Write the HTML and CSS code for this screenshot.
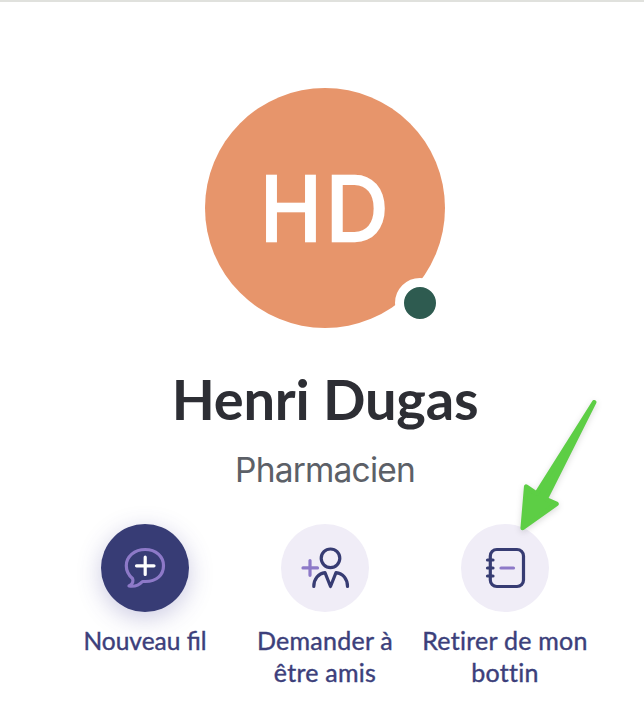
FILE: index.html
```html
<!DOCTYPE html>
<html lang="fr">
<head>
<meta charset="utf-8">
<title>Henri Dugas</title>
<link rel="stylesheet" href="styles.css">
</head>
<body>
<main class="profile">
  <div class="avatar"><span class="initials">HD</span><span class="status"></span></div>
  <h1 class="name">Henri Dugas</h1>
  <p class="role">Pharmacien</p>
  <div class="actions">
    <div class="action">
      <div class="circle primary">
        <svg width="88" height="88" viewBox="0 0 88 88" fill="none" stroke-width="3.200" stroke-linecap="round" stroke-linejoin="round">
          <path stroke="#8d79c8" d="M31.500 54.500C27.500 51 25.300 46.500 25.300 41.700C25.300 32.500 33.500 25.500 44.200 25.500C55 25.500 62.500 32.500 62.500 41.700C62.500 51 55.500 57.500 44.500 57.500H41.500C38 61.300 33 62.800 28 62C31.500 60 32.700 57.300 31.500 54.500Z"/>
          <path stroke="#fff" d="M44.200 33.200V50.500M35.500 41.800H53"/>
        </svg>
      </div>
      <span class="label short">Nouveau fil</span>
    </div>
    <div class="action">
      <div class="circle">
        <svg width="88" height="88" viewBox="0 0 88 88" fill="none" stroke="#373c73" stroke-width="3.200" stroke-linecap="round" stroke-linejoin="round">
          <circle cx="49.500" cy="34.300" r="9.300"/>
          <path d="M32.800 62.500C32.800 55 37.500 49.300 44 48.700L49.500 62.500L55 48.700C62 49.300 66.500 55 66.500 62.500"/>
          <path stroke="#8d79c8" d="M29 36.500V51.300M22 43.900H36.500"/>
        </svg>
      </div>
      <span class="label">Demander à être amis</span>
    </div>
    <div class="action">
      <div class="circle">
        <svg width="88" height="88" viewBox="0 0 88 88" fill="none" stroke="#373c73" stroke-width="3.200" stroke-linecap="round">
          <rect x="29.300" y="25.500" width="33.200" height="37" rx="6.500"/>
          <path d="M26.500 36H32M26.500 44H32M26.500 52H32"/>
          <path stroke="#8d79c8" d="M40 44H52.500"/>
        </svg>
      </div>
      <span class="label">Retirer de mon bottin</span>
    </div>
  </div>
  <svg class="pointer" width="100" height="150" viewBox="0 0 100 150">
    <path fill="#5dce45" stroke="#5dce45" stroke-width="4.500" stroke-linejoin="round" d="M84.200 14.300L26.500 105.700L16.200 98.500L12.700 140L46.500 115.800L35.600 111Z"/>
  </svg>
</main>
</body>
</html>
```
FILE: styles.css
```css
* { box-sizing: border-box; }
body {
  margin: 0;
  background: #fff;
  font-family: Lato, "Liberation Sans", sans-serif;
}
.profile {
  position: relative;
  width: 644px;
  height: 725px;
  padding: 86px 0 0 6px;
  border-top: 2px solid #e0e1dd;
  display: flex;
  flex-direction: column;
  align-items: center;
  overflow: hidden;
}
.avatar {
  position: relative;
  flex: none;
  width: 240px;
  height: 240px;
  border-radius: 50%;
  background: #e7956b;
  display: flex;
  align-items: center;
  justify-content: center;
}
.initials {
  color: #fff;
  font-size: 91px;
  line-height: 112px;
  font-weight: 500;
  letter-spacing: 4px;
  margin: 0 0 4px 1px;
  transform: scaleX(.89);
  -webkit-text-stroke: 2.500px #fff;
}
.status {
  position: absolute;
  left: 190px;
  top: 190px;
  width: 50px;
  height: 50px;
  border: 9px solid #fff;
  border-radius: 50%;
  background: #2e5b50;
}
.name {
  margin: 37px 0 0;
  height: 68px;
  color: #2d2e34;
  font-size: 56px;
  line-height: 68px;
  font-weight: 700;
  letter-spacing: -.2px;
  white-space: nowrap;
}
.role {
  margin: 17px 0 0;
  height: 40px;
  color: #5c6067;
  font-family: Inter, "Liberation Sans", sans-serif;
  font-size: 33.500px;
  line-height: 40px;
  font-weight: 400;
  letter-spacing: -.8px;
}
.actions {
  display: grid;
  grid-template-columns: repeat(3, 180px);
  margin-top: 34px;
}
.action {
  display: flex;
  flex-direction: column;
  align-items: center;
}
.circle {
  width: 88px;
  height: 88px;
  border-radius: 50%;
  background: #f0edf7;
}
.circle svg { display: block; }
.circle.primary {
  background: #373c75;
  box-shadow: 0 6px 24px rgba(70, 65, 150, .28);
}
.label {
  width: 176px;
  margin-top: 12px;
  color: #3c3f7b;
  font-size: 25px;
  line-height: 32px;
  letter-spacing: .25px;
  text-align: center;
  -webkit-text-stroke: .4px #3c3f7b;
}
.label.short {
  margin-top: 13px;
  font-size: 24.500px;
  letter-spacing: 0;
}
.pointer {
  position: absolute;
  left: 510px;
  top: 386px;
  filter: drop-shadow(0 2px 3px rgba(0, 0, 0, .15));
}
```
